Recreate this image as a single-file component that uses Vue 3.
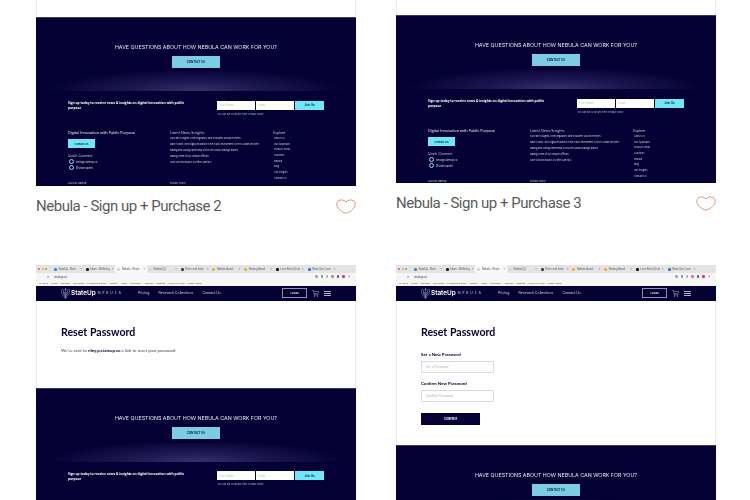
<template>
  <div class="page">
    <div v-for="(col, c) in columns" :key="c" class="col">
      <article v-for="card in col" :key="card.id" class="card" :class="card.kind">
        <div class="shot" :style="{ height: card.height + 'px' }">
          <template v-if="card.kind === 'top'">
            <div class="blank" :style="{ height: card.blank + 'px' }"></div>
          </template>

          <template v-else>
            <!-- browser chrome -->
            <div class="tabs">
              <span class="lights"><i class="red"></i><i class="yellow"></i><i class="green"></i></span>
              <span v-for="tab in tabs" :key="tab.label" class="tab" :class="{ active: tab.active }">
                <i class="favicon" :style="{ background: tab.color }"></i>{{ tab.label }}<b>×</b>
              </span>
            </div>
            <div class="toolbar">
              <span class="arrows">← → ⟳</span>
              <span class="url">stateup.co</span>
              <span class="exts">
                <i v-for="color in extensions" :key="color" :style="{ background: color }"></i>
              </span>
            </div>
            <div class="bookmarks">
              <span v-for="mark in bookmarks" :key="mark">{{ mark }}</span>
            </div>
            <nav class="nav">
              <svg class="logo" viewBox="0 0 10 12" fill="none" stroke="#9fb4dc" stroke-width=".5">
                <path d="M0 2 L2 1.5 L5 11.5 L8 1.5 L10 2 L8.5 7 L5 11.5 L1.5 7 Z" />
                <path d="M5 0 V11 M3 4 L5 6 L7 4 M2 5.5 L5 8 L8 5.5 M3.4 2.5 L5 .5 L6.6 2.5" />
              </svg>
              <span class="brand">StateUp</span>
              <span class="product">NEBULA</span>
              <span class="links">
                <a>Pricing</a><a>Research Collections</a><a>Contact Us</a>
              </span>
              <span class="login">LOGIN</span>
              <svg class="cart" viewBox="0 0 8 8" fill="none" stroke="#c9cddc" stroke-width=".5">
                <path d="M0 .5 H1.6 L2.6 5.4 H7 M2 1.6 H7.6 L7 4.2 H2.4" />
                <circle cx="3" cy="6.9" r=".6" /><circle cx="6.4" cy="6.9" r=".6" />
              </svg>
              <span class="burger"><i></i><i></i><i></i></span>
            </nav>

            <section v-if="card.kind === 'sent'" class="reset sent-body">
              <h2>Reset Password</h2>
              <p>We've sent to <b>riley.p.stateup.co</b> a link to reset your password</p>
            </section>
            <section v-else class="reset form-body">
              <h2>Reset Password</h2>
              <label>Set a New Password</label>
              <div class="field">Set a Password</div>
              <label>Confirm New Password</label>
              <div class="field">Confirm Password</div>
              <div class="confirm">CONFIRM</div>
            </section>
          </template>

          <footer class="foot">
            <div class="cta">
              <h3>HAVE QUESTIONS ABOUT HOW NEBULA CAN WORK FOR YOU?</h3>
              <div class="contact">CONTACT US</div>
            </div>
            <div class="signup">
              <p>Sign up today to receive news &amp; insights on digital innovation with public purpose</p>
              <div class="signup-form">
                <div class="inputs">
                  <span>First Name</span><span>Email</span><b>Join Us</b>
                </div>
                <small>You can opt out at any time. <em>Privacy Policy</em></small>
              </div>
            </div>
            <div class="cols">
              <div>
                <h4 class="tagline">Digital Innovation with Public Purpose</h4>
                <div class="contact-small">Contact Us</div>
                <h5>Quick Connect</h5>
                <div class="social"><i></i>hello@stateup.co</div>
                <div class="social"><i></i>@StateUpInfo</div>
              </div>
              <div>
                <h5 class="list-head">Latest News/Insights</h5>
                <a v-for="item in news" :key="item" class="news">{{ item }}</a>
              </div>
              <div>
                <h5 class="list-head">Explore</h5>
                <a v-for="item in explore" :key="item" class="explore">{{ item }}</a>
              </div>
            </div>
            <div class="legal">
              <span>2020 © StateUp</span>
              <span>Privacy Policy</span>
            </div>
          </footer>
        </div>
        <div v-if="card.title" class="caption">
          <span>{{ card.title }}</span>
          <svg class="heart" viewBox="0 0 20 15" fill="none" stroke="#e2956f" stroke-width="1">
            <path d="M10 2.8 C8 .9 5 .5 3 1.4 C1 2.4 .5 4.8 1 6.8 C2 10 6 13.6 10 14 C14 13.6 18 10 19 6.8 C19.5 4.8 19 2.4 17 1.4 C15 .5 12 .9 10 2.8 Z" />
          </svg>
        </div>
      </article>
    </div>
  </div>
</template>

<script setup>
// first row is scrolled past the top of the window, so only the tail of each shot shows
const columns = [
  [
    { id: 1, kind: 'top', blank: 17, height: 186, title: 'Nebula - Sign up + Purchase 2' },
    { id: 3, kind: 'sent', height: 235 }
  ],
  [
    { id: 2, kind: 'top', blank: 15, height: 183, title: 'Nebula - Sign up + Purchase 3' },
    { id: 4, kind: 'form', height: 235 }
  ]
]

const tabs = [
  { label: 'StateUp - Next', color: '#4d86c8' },
  { label: 'Inbox - Wellesley', color: '#222' },
  { label: 'Nebula - Reset', color: '#d8d8d8', active: true },
  { label: 'Nebula (1)', color: '#d8d8d8' },
  { label: 'Press and Joint', color: '#444' },
  { label: 'Nebula Board', color: '#e2b93b' },
  { label: 'Nesting Board', color: '#e2b93b' },
  { label: 'Lean Pixel & Info', color: '#1c1c1c' },
  { label: 'Show Use Case', color: '#3d78c9' }
]

const extensions = ['#9aa', '#5a8', '#9b9', '#d77', '#555', '#e0307a', '#ccc']

const bookmarks = [
  'My Drive', 'News', 'Calendar', 'Payments', 'Investment & more',
  'monday', 'Gmail', 'Dominant', 'Analytics', 'Zendesk', 'Lean Love Pros', 'Nesta Instant'
]

const news = [
  'Our Path to Nigeria: From Regulatory Idea to Modern Ground Theories',
  'Make it Work: Why Digital Innovation in the Public Environment is Key to Urban Recovery',
  'Making and Scaling Partnership Across the Global Strategic Branch',
  'Making Sense of our Stewpot Officials',
  'Case Function Brazos & Uniflex Special 3'
]

const explore = ['About Us', 'Our Approach', 'Product Areas', 'Solutions', 'Nebula', 'Blog', 'Our Insights', 'Contact Us']
</script>

<style>
html, body {
  background: #fff;
  overflow: hidden;
}
</style>

<style scoped>
.page {
  display: flex;
  gap: 40px;
  height: 500px;
  padding-left: 36px;
  overflow: hidden;
  font-family: Roboto, "Liberation Sans", sans-serif;
}

.col {
  width: 320px;
  display: flex;
  flex-direction: column;
}

.card.top {
  height: 265px;
  flex: none;
}

.shot {
  overflow: hidden;
  background: #fff;
  box-shadow: inset 1px 0 #ececef, inset -1px 0 #ececef;
  filter: blur(0.4px);
}

.caption {
  display: flex;
  justify-content: space-between;
  align-items: center;
  height: 40px;
  font-size: 15px;
  letter-spacing: -0.48px;
  color: #5a5a5a;
}

.heart {
  width: 20px;
  height: 15px;
}

/* browser chrome */
.tabs {
  height: 8px;
  display: flex;
  align-items: center;
  background: #e4e4e6;
  font: 2.6px "Liberation Sans", sans-serif;
  color: #555;
}

.lights {
  width: 14px;
  display: flex;
  gap: 1.4px;
  padding-left: 2px;
}

.lights i {
  width: 2.2px;
  height: 2.2px;
  border-radius: 50%;
}

.red { background: #e8574f; }
.yellow { background: #e8b63b; }
.green { background: #58b947; }

.tab {
  width: 31.7px;
  height: 8px;
  display: flex;
  align-items: center;
  gap: 1.5px;
  padding-left: 2px;
  box-sizing: border-box;
  white-space: nowrap;
  overflow: hidden;
}

.tab b {
  margin-left: auto;
  padding-right: 2px;
  font-weight: 400;
}

.tab.active {
  background: #f8f8f8;
}

.favicon {
  flex: none;
  width: 3px;
  height: 3px;
  border-radius: 1px;
}

.toolbar {
  height: 7px;
  display: flex;
  align-items: center;
  gap: 4px;
  padding: 0 4px;
  background: #f6f6f7;
  font: 2.8px "Liberation Sans", sans-serif;
  color: #666;
}

.url {
  color: #333;
}

.exts {
  margin-left: auto;
  display: flex;
  gap: 3px;
  padding-right: 2px;
}

.exts i {
  width: 2.4px;
  height: 2.4px;
  border-radius: 50%;
}

.bookmarks {
  height: 6px;
  display: flex;
  align-items: center;
  gap: 3.4px;
  padding-left: 3px;
  background: #f6f6f7;
  font: 2.3px "Liberation Sans", sans-serif;
  color: #444;
  white-space: nowrap;
}

.nav {
  height: 14.7px;
  display: flex;
  align-items: center;
  padding-left: 25px;
  background: #050033;
  color: #d8dbe8;
}

.logo {
  width: 9px;
  height: 11px;
  margin-right: 1px;
}

.brand {
  width: 27px;
  font: 600 6.4px Inter, sans-serif;
  color: #fff;
}

.product {
  width: 40px;
  font: 600 3.3px Inter, sans-serif;
  letter-spacing: 1.9px;
  color: #9fb4dc;
}

.links {
  width: 144px;
  display: flex;
  gap: 9px;
  font: 3.5px Inter, sans-serif;
}

.login {
  width: 25px;
  height: 10px;
  margin-right: 5px;
  border: 0.5px solid #8f92a8;
  box-sizing: border-box;
  display: flex;
  align-items: center;
  justify-content: center;
  font: 600 2.6px Inter, sans-serif;
  color: #fff;
}

.cart {
  width: 7px;
  height: 7px;
  margin-right: 5px;
}

.burger {
  width: 7px;
  display: flex;
  flex-direction: column;
  gap: 1.2px;
}

.burger i {
  height: 0.5px;
  background: #a9adc0;
}

/* page bodies */
.reset {
  padding-left: 25px;
  color: #050033;
  font-family: Lato, Inter, sans-serif;
}

.reset h2 {
  margin: 0;
  font-size: 10.6px;
  line-height: 13px;
  font-weight: 700;
}

.sent-body {
  height: 87.3px;
  padding-top: 25px;
  box-sizing: border-box;
}

.sent-body p {
  margin: 9.5px 0 0;
  font-size: 4.3px;
  line-height: 6px;
  color: #444;
}

.sent-body b {
  color: #050033;
}

.form-body {
  height: 144.3px;
  padding-top: 25px;
  box-sizing: border-box;
}

.form-body label {
  display: block;
  margin-top: 8px;
  font-size: 4.4px;
  font-weight: 700;
  line-height: 6px;
}

.form-body h2 + label {
  margin-top: 13px;
}

.field {
  width: 73px;
  height: 12px;
  margin-top: 3px;
  padding-left: 4px;
  box-sizing: border-box;
  border: 0.5px solid #d9d9de;
  border-radius: 1px;
  display: flex;
  align-items: center;
  font-size: 3.4px;
  color: #b4b4bc;
}

.confirm {
  width: 59px;
  height: 12px;
  margin-top: 11.5px;
  display: flex;
  align-items: center;
  justify-content: center;
  background: #050033;
  color: #fff;
  font-size: 2.8px;
  font-weight: 700;
}

/* shared footer */
.foot {
  background: #050033;
  border-top: 0.5px solid #3d3a63;
  color: #e4e5f0;
  font-family: Inter, sans-serif;
}

.cta {
  height: 73px;
  padding-top: 26px;
  box-sizing: border-box;
  display: flex;
  flex-direction: column;
  align-items: center;
  background: radial-gradient(ellipse 47% 30% at 50% 100%, #35316a 0%, #1c1750 45%, #050033 100%);
}

.cta h3 {
  margin: 0;
  font-size: 5.3px;
  line-height: 6px;
  font-weight: 400;
  white-space: nowrap;
}

.contact {
  width: 48px;
  height: 12px;
  margin-top: 6px;
  display: flex;
  align-items: center;
  justify-content: center;
  background: #7bcde2;
  color: #050033;
  font-size: 2.8px;
  font-weight: 600;
}

.signup {
  display: flex;
  justify-content: space-between;
  padding: 9.5px 32px 0;
}

.signup p {
  width: 118px;
  margin: 0.5px 0 0;
  font: 700 3.2px/5px "Open Sans", sans-serif;
  color: #fff;
}

.inputs {
  display: flex;
  gap: 1.3px;
  font-size: 2.8px;
}

.inputs span {
  width: 37.5px;
  height: 9px;
  padding-left: 2px;
  box-sizing: border-box;
  display: flex;
  align-items: center;
  background: #fff;
  color: #c4c4c8;
}

.inputs b {
  width: 29px;
  height: 9px;
  display: flex;
  align-items: center;
  justify-content: center;
  background: #6fe7f6;
  color: #050033;
  font-weight: 600;
}

.signup-form small {
  display: block;
  margin-top: 3px;
  font-size: 2.3px;
  line-height: 4px;
  color: #b8bacb;
}

.signup-form em {
  font-style: normal;
  color: #8fd6ea;
}

.cols {
  display: grid;
  grid-template-columns: 102px 103px 1fr;
  padding: 13.5px 0 0 32px;
}

.cols h4,
.cols h5 {
  margin: 0;
  font-weight: 400;
}

.tagline {
  font: 600 3.8px/6px "Open Sans", sans-serif;
  color: #fff;
}

.contact-small {
  width: 27px;
  height: 9px;
  margin-top: 3px;
  display: flex;
  align-items: center;
  justify-content: center;
  background: #6fe7f6;
  color: #050033;
  font-size: 2.6px;
  font-weight: 600;
}

.cols > div > h5 {
  margin-top: 4.5px;
  font-size: 3.5px;
  line-height: 6px;
  color: #c9cbdc;
}

.cols > div > .list-head {
  margin-top: 0;
}

.social {
  display: flex;
  align-items: center;
  gap: 2px;
  height: 6px;
  font-size: 2.6px;
  color: #d8dae6;
}

.social i {
  width: 3px;
  height: 3px;
  margin-left: 1px;
  border: 1px solid #9fd9ee;
  border-radius: 50%;
  background: #050033;
}

.news {
  display: block;
  height: 6px;
  font-size: 2.15px;
  line-height: 6px;
  white-space: nowrap;
  color: #d8dae6;
}

.explore {
  display: block;
  height: 5.7px;
  padding-left: 1px;
  font-size: 2.4px;
  line-height: 5.7px;
  color: #c9cbdc;
}

.legal {
  display: grid;
  grid-template-columns: 102px 1fr;
  padding-left: 32px;
  font-size: 2.4px;
  line-height: 4px;
  color: #c9cbdc;
}
</style>
